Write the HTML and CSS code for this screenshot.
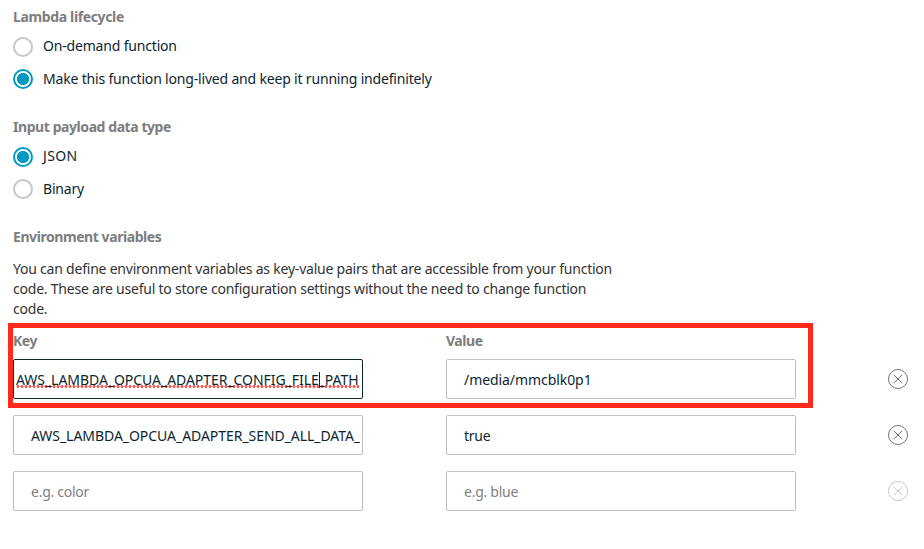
FILE: index.html
```html
<!DOCTYPE html>
<html lang="en">
<head>
<meta charset="utf-8">
<title>Lambda configuration</title>
<link rel="stylesheet" href="styles.css">
</head>
<body>
<main class="form">
  <section class="group">
    <h2 class="heading"><span class="t-life">Lambda lifecycle</span></h2>
    <div class="option first"><span class="radio"></span><span class="option-text">On-demand function</span></div>
    <div class="option"><span class="radio checked"></span><span class="option-text">Make this function long-lived and keep it running indefinitely</span></div>
  </section>
  <section class="group">
    <h2 class="heading"><span>Input payload data type</span></h2>
    <div class="option first"><span class="radio checked"></span><span class="option-text t-json">JSON</span></div>
    <div class="option"><span class="radio"></span><span class="option-text">Binary</span></div>
  </section>
  <section class="variables">
    <h2 class="heading"><span>Environment variables</span></h2>
    <p class="description">You can define environment variables as key-value pairs that are accessible from your function<br>code. These are useful to store configuration settings without the need to change function<br>code.</p>
    <div class="grid">
      <div class="column-title">Key</div>
      <div class="column-title">Value</div>
      <div></div>
      <div class="field focused"><span class="clip"><span class="misspelled">AWS_LAMBDA_OPCUA_ADAPTER_CONFIG_FILE<i class="caret"></i>_PATH</span></span></div>
      <div class="field"><span class="clip t-media">/media/mmcblk0p1</span></div>
      <svg class="remove" viewBox="0 0 20 20"><circle cx="10" cy="10" r="9.5"/><path d="M5.8 5.8l8.4 8.4M14.2 5.8l-8.4 8.4"/></svg>
      <div class="field"><span class="clip t-send">AWS_LAMBDA_OPCUA_ADAPTER_SEND_ALL_DATA_</span></div>
      <div class="field"><span class="clip t-short">true</span></div>
      <svg class="remove" viewBox="0 0 20 20"><circle cx="10" cy="10" r="9.5"/><path d="M5.8 5.8l8.4 8.4M14.2 5.8l-8.4 8.4"/></svg>
      <div class="field empty"><span class="clip t-short">e.g. color</span></div>
      <div class="field empty"><span class="clip t-short">e.g. blue</span></div>
      <svg class="remove disabled" viewBox="0 0 20 20"><circle cx="10" cy="10" r="9.5"/><path d="M5.8 5.8l8.4 8.4M14.2 5.8l-8.4 8.4"/></svg>
      <div class="highlight"></div>
    </div>
  </section>
</main>
</body>
</html>
```
FILE: styles.css
```css
* { box-sizing: border-box; }
body {
  margin: 0;
  background: #fff;
  color: #0c2630;
  font: 14px/20px "Noto Sans", "Open Sans", sans-serif;
}
.form { padding: 7px 13px 0; }
.group { height: 110px; }
.heading {
  margin: 0 0 10px;
  font-size: 14px;
  line-height: 20px;
  font-weight: 700;
  letter-spacing: -0.43px;
  color: #7d7d7d;
}
.t-life { letter-spacing: -0.36px; }
.option {
  display: flex;
  align-items: center;
  gap: 10px;
  height: 20px;
  margin-bottom: 12px;
  white-space: nowrap;
}
.option-text { letter-spacing: -0.18px; }
.first .option-text { margin-top: -2px; }
.option-text.t-json { letter-spacing: 0.35px; }
.radio {
  width: 20px;
  height: 20px;
  border: 2px solid #c6c6c6;
  border-radius: 50%;
}
.radio.checked {
  border-color: #0099c2;
  background: radial-gradient(circle, #0099c2 5.7px, #fff 6.3px);
}
.variables .heading { margin-bottom: 12px; }
.description { margin: 0; color: #333; letter-spacing: -0.22px; white-space: nowrap; }
.grid {
  position: relative;
  display: grid;
  grid-template-columns: 433px 442px 20px;
  grid-template-rows: 20px repeat(3, 48px);
  row-gap: 8px;
  margin-top: 12px;
}
.column-title { font-weight: 700; letter-spacing: -0.45px; color: #7d7d7d; }
.field {
  display: flex;
  align-items: center;
  width: 350px;
  height: 40px;
  padding: 2px 2px 0 17px;
  border: 1px solid #bfbfbf;
  border-radius: 2px;
}
.focused { border-color: #0c2630; padding-left: 2px; }
.empty { color: #808080; }
.clip { flex: 1; overflow: hidden; white-space: nowrap; }
.t-media { letter-spacing: -0.07px; }
.t-send { letter-spacing: -0.05px; }
.t-short { letter-spacing: -0.26px; }
.misspelled {
  display: inline-block;
  height: 20px;
  letter-spacing: -0.05px;
  background: radial-gradient(circle, #ff5a55 1.3px, transparent 1.8px) 0 15px / 4px 3px repeat-x;
}
.caret {
  display: inline-block;
  width: 1px;
  height: 16px;
  margin-right: -1px;
  background: #0c2630;
  vertical-align: -3px;
}
.remove { width: 20px; height: 20px; margin-top: 10px; fill: none; stroke: #747474; stroke-width: 1; }
.remove.disabled { stroke: #c8c8c8; }
.highlight {
  position: absolute;
  left: -5px;
  top: -8px;
  width: 805px;
  height: 85px;
  border: 5px solid #ff2a1c;
}
```
